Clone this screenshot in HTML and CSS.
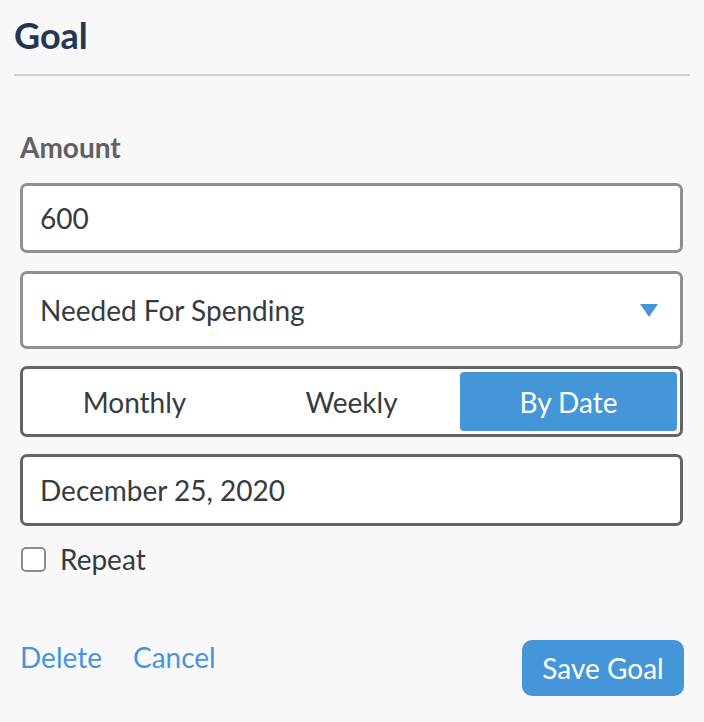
FILE: index.html
```html
<!DOCTYPE html>
<html>
<head>
<meta charset="utf-8">
<link rel="stylesheet" href="styles.css">
</head>
<body>
<div class="page">
  <h1 class="title">Goal</h1>
  <div class="divider"></div>
  <form class="form">
    <label class="label">Amount</label>
    <div class="field field-light field-input">600</div>
    <div class="field field-light field-select">
      <span>Needed For Spending</span>
      <svg class="caret" width="18" height="13" viewBox="0 0 18 13"><path d="M0 0H18L9 13Z" fill="#4596d8"/></svg>
    </div>
    <div class="segmented">
      <div class="seg">Monthly</div>
      <div class="seg">Weekly</div>
      <div class="seg seg-active">By Date</div>
    </div>
    <div class="field field-dark field-input">December 25, 2020</div>
    <div class="check-row">
      <span class="checkbox"></span>
      <span class="check-label">Repeat</span>
    </div>
    <div class="actions">
      <div class="links">
        <a class="link">Delete</a>
        <a class="link">Cancel</a>
      </div>
      <button type="button" class="save">Save Goal</button>
    </div>
  </form>
</div>
</body>
</html>
```

FILE: styles.css
```css
html, body {
  margin: 0;
  padding: 0;
  background: #f8f8fa;
}
body {
  font-family: Lato, "Open Sans", sans-serif;
  color: #363b40;
}
.page {
  padding: 14px 14px 0 14px;
}
.title {
  margin: 0;
  font-size: 36px;
  line-height: 43px;
  font-weight: 700;
  color: #243752;
}
.divider {
  height: 2px;
  background: #d2d2d6;
  margin-top: 17px;
}
.form {
  padding: 0 7px 0 6px;
  display: flex;
  flex-direction: column;
}
.label {
  margin-top: 55px;
  font-size: 28px;
  line-height: 32px;
  font-weight: 700;
  color: #616161;
}
.field {
  box-sizing: border-box;
  background: #fff;
  border: 3px solid #8f8f94;
  border-radius: 7px;
  display: flex;
  align-items: center;
  padding: 0 17px;
  font-size: 28px;
  color: #363b40;
}
.field-light { border-color: #8f8f94; }
.field-dark { border-color: #646466; }
.field-input {
  height: 70px;
  margin-top: 20px;
}
.field-select {
  height: 78px;
  margin-top: 18px;
  justify-content: space-between;
  padding-right: 22px;
}
.caret { display: block; }
.segmented {
  box-sizing: border-box;
  margin-top: 17px;
  height: 71px;
  border: 3px solid #646466;
  border-radius: 7px;
  background: #fff;
  padding: 3px;
  display: grid;
  grid-template-columns: 1fr 1fr 1fr;
}
.seg {
  display: flex;
  align-items: center;
  justify-content: center;
  font-size: 28px;
  color: #363b40;
  border-radius: 4px;
}
.seg-active {
  background: #4596d8;
  color: #fff;
}
.segmented + .field-input {
  height: 72px;
  margin-top: 17px;
}
.check-row {
  display: flex;
  align-items: center;
  margin-top: 16px;
  gap: 14px;
}
.checkbox {
  box-sizing: border-box;
  width: 25px;
  height: 25px;
  margin-left: 1px;
  border: 2px solid #8b8b8f;
  border-radius: 5px;
  background: #fff;
}
.check-label {
  font-size: 28px;
  color: #363b40;
}
.actions {
  margin-top: 64px;
  display: flex;
  justify-content: space-between;
  align-items: flex-start;
}
.links {
  display: flex;
  gap: 31px;
  padding-top: 1px;
}
.link {
  font-size: 28px;
  color: #4596d8;
  line-height: 32px;
}
.save {
  box-sizing: border-box;
  height: 56px;
  width: 162px;
  margin-right: -1px;
  border: none;
  border-radius: 10px;
  background: #4596d8;
  color: #fff;
  font-family: Lato, "Open Sans", sans-serif;
  font-size: 28px;
  padding: 0;
}
```
